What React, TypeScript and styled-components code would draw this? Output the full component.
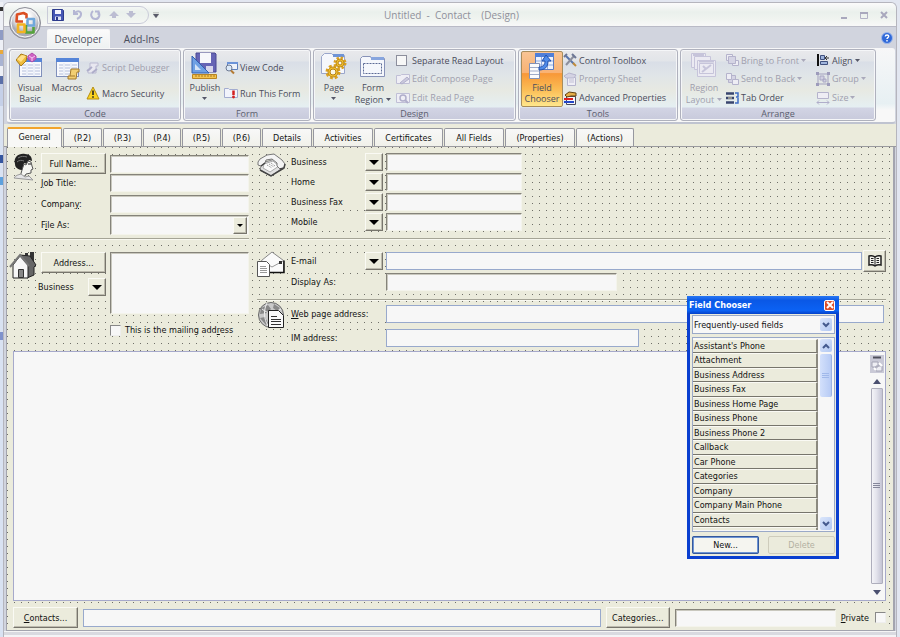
import React from 'react';
import styled, { createGlobalStyle, css } from 'styled-components';

const ribbonFont = '"Open Sans", "Noto Sans", sans-serif';
const formFont = '"DejaVu Sans Condensed", "DejaVu Sans", sans-serif';
const face = '#ebebdc';
const muted = '#a09fae';

const GlobalStyle = createGlobalStyle`
  * { box-sizing: border-box; }
  body { margin: 0; background: #e2e6f0; }
  button, input, select, textarea { font: inherit; color: inherit; margin: 0; border-radius: 0; }
  button { padding: 0; background: none; border: 0; white-space: nowrap; }
  svg { display: block; flex: none; }
`;

/* ---------- window frame ---------- */

const Desktop = styled.div`
  display: flex;
  min-height: 100vh;
  padding: 2px 3px 0 0;
  font: 9px/12px ${formFont};
  color: #111;
`;
const BehindStrip = styled.div`
  width: 3px;
  flex: none;
  background: linear-gradient(#eef0f6 5px, #333 5px 9px, #eef0f6 9px 28px, #8f9bc4 28px 38px, #eef0f6 38px 48px,
    #e9a93a 48px 52px, #a9b3d2 52px 64px, #eef0f6 64px 74px, #5a6fa8 74px 82px, #c5d0e8 82px 104px, #d9e2f2 104px 153px,
    #34559f 153px 161px, #d9e2f2 161px 175px, #5da0dd 175px 183px, #d9e2f2 183px 330px, #7f92cc 330px 338px, #d9e2f2 338px);
`;
const Frame = styled.div`
  position: relative;
  flex: 1;
  min-width: 0;
  display: flex;
  flex-direction: column;
  border: 1px solid #b5b5bd;
  border-bottom: 0;
  border-radius: 6px 6px 0 0;
  background: #d1d4de;
  overflow: hidden;
`;

/* ---------- title bar ---------- */

const TitleBar = styled.header`
  position: relative;
  display: flex;
  align-items: center;
  height: 24px;
  padding: 0 8px 0 43px;
  border-bottom: 1px solid #b9bac6;
  background: linear-gradient(#fbfbfb, #eaf0ec 40%, #f0f4f0 70%, #f8f8f8);
  font: 10px/14px ${ribbonFont};
  color: #8f909b;
`;
const OfficeButton = styled.button`
  position: absolute;
  z-index: 2;
  left: 5px;
  top: 4px;
`;
const QuickBar = styled.div`
  display: flex;
  align-items: center;
  justify-content: space-between;
  width: 102px;
  height: 18px;
  padding: 0 12px 0 4px;
  border: 1px solid #c9cbd8;
  border-radius: 0 9px 9px 0;
`;
const QuickMore = styled.button`
  margin-left: 4px;
`;
const Title = styled.h1`
  flex: 1;
  margin: 0 0 0 4px;
  text-align: center;
  font: inherit;
  white-space: pre;
`;
const WindowButtons = styled.div`
  display: flex;
  gap: 12px;
  margin-left: 100px;
`;

/* ---------- ribbon ---------- */

const RibbonTabs = styled.nav`
  display: flex;
  align-items: flex-end;
  height: 21px;
  padding: 0 3px 0 43px;
  font: 10px/18px ${ribbonFont};
  color: #4b4e5d;
`;
const RibbonTab = styled.button<{ $active?: boolean }>`
  height: 19px;
  width: 63px;
  ${(p) => p.$active && css`
    background: linear-gradient(#fbfbfb, #eef2f2);
    border: 1px solid #f6f6f6;
    border-bottom: 0;
    border-radius: 2px 2px 0 0;
  `}
`;
const HelpButton = styled.button`
  margin-left: auto;
  align-self: center;
`;
const RibbonPanel = styled.div`
  display: flex;
  gap: 2px;
  margin: 0 1px 0 3px;
  padding: 1px 2px 1px;
  border-bottom: 2px solid #bfc3d0;
  border-radius: 3px;
  background: linear-gradient(#f7f7f8, #e7f0f3 75%, #f8f8f8 84%);
  font: 9px/11px ${ribbonFont};
  color: #4b4d5c;
`;
const GroupBox = styled.section<{ $width: number }>`
  display: flex;
  flex-direction: column;
  width: ${(p) => p.$width}px;
  height: 72px;
  border: 1px solid #afb1bd;
  border-radius: 3px;
  box-shadow: inset 0 0 0 1px #f5f6f8;
  background: linear-gradient(#e9e9ec 0, #e2e5e9 11px, #d9dee7 12px, #e0e5e8 25px, #e7e9e2 40px, #e5eff2 57px, #d2d4e4 58px, #c6c8da 72px);
`;
const GroupBody = styled.div`
  display: flex;
  align-items: flex-start;
  height: 57px;
  padding: 1px 2px 0;
`;
const GroupTitle = styled.h2`
  margin: 0;
  text-align: center;
  font: 9px/13px ${ribbonFont};
  color: #5b5d6d;
`;
const BigButton = styled.button<{ $active?: boolean; $width: number }>`
  display: flex;
  flex-direction: column;
  align-items: center;
  width: ${(p) => p.$width}px;
  height: 56px;
  padding-top: 1px;
  border-radius: 2px;
  gap: 2px;
  white-space: normal;
  &:disabled { color: ${muted}; }
  ${(p) => p.$active && css`
    border: 1px solid #a88d5b;
    padding-top: 0;
    background: linear-gradient(#f8c494, #f9b273 38%, #f89838 40%, #fbbd55 70%, #ffe78c);
  `}
`;
const SmallColumn = styled.div<{ $rows: number }>`
  display: flex;
  flex-direction: column;
  height: 56px;
  justify-content: space-around;
  padding: ${(p) => (p.$rows === 2 ? '4px 0 1px' : '0')};
`;
const DesignColumn = styled(SmallColumn)`
  padding-left: 2px;
`;
const SmallButton = styled.button`
  display: flex;
  align-items: center;
  gap: 2px;
  height: 16px;
  &:disabled { color: ${muted}; }
`;
const RibbonCheck = styled.label`
  display: flex;
  align-items: center;
  gap: 5px;
  height: 16px;
  white-space: nowrap;
`;
const CheckBox = styled.input`
  appearance: none;
  flex: none;
  width: 11px;
  height: 11px;
  background: #f7f7f7;
  border: 1px solid #8c8e9c;
`;
const FormCheckBox = styled(CheckBox)`
  border-color: #888 #eee #eee #888;
`;
const BigLabel = styled.span`
  display: block;
`;
const DropLine = styled.span`
  display: flex;
  align-items: center;
  justify-content: center;
  gap: 3px;
  min-height: 8px;
  margin-top: 1px;
`;

/* ---------- page tabs ---------- */

const PageTabs = styled.div`
  display: flex;
  align-items: flex-end;
  gap: 1px;
  height: 23px;
  padding-left: 3px;
  background: ${face};
  border-bottom: 1px solid #9a9a9e;
`;
const PageTab = styled.button<{ $width: number; $active?: boolean }>`
  width: ${(p) => p.$width}px;
  height: ${(p) => (p.$active ? 20 : 18)}px;
  margin-bottom: ${(p) => (p.$active ? -1 : 0)}px;
  border: 1px solid #96979f;
  border-bottom: 0;
  border-radius: 2px 2px 0 0;
  background: linear-gradient(#f8f8f8, #f1f1ea);
  ${(p) => p.$active && css`
    border-top: 2px solid #f2a42c;
    background: #f8f8f6;
    padding-bottom: 2px;
  `}
`;

/* ---------- form surface ---------- */

const Surface = styled.main`
  flex: 1;
  display: flex;
  flex-direction: column;
  margin: 0 1px 0 2px;
  padding: 2px 7px 1px 6px;
  border: solid #a3a4ae;
  border-width: 0 2px 1px 1px;
  background: conic-gradient(at 1px 1px, transparent 75%, #6f6f68 0) 0 0 / 7px 7px ${face};
`;
const Columns = styled.div`
  display: grid;
  grid-template-columns: 236px 1fr;
  column-gap: 8px;
`;
const Side = styled.div`
  display: flex;
  flex-direction: column;
`;
const Block = styled.section<{ $icon?: number; $height: number; $top?: number }>`
  display: grid;
  grid-template-columns: ${(p) => p.$icon ?? 34}px 1fr;
  align-items: start;
  height: ${(p) => p.$height}px;
  padding-top: ${(p) => p.$top ?? 0}px;
`;
const Rows = styled.div<{ $gap: number; $top?: number }>`
  display: flex;
  flex-direction: column;
  gap: ${(p) => p.$gap}px;
  padding-top: ${(p) => p.$top ?? 0}px;
`;
const Rule = styled.hr`
  width: 100%;
  margin: 0;
  border: 0;
  border-top: 1px solid #a5a496;
  border-bottom: 1px solid #f8f8f0;
`;
const Field = styled.div<{ $label?: number; $height?: number }>`
  display: grid;
  grid-template-columns: ${(p) => p.$label ?? 69}px 1fr;
  align-items: center;
  height: ${(p) => p.$height ?? 18}px;
`;
const LabelCell = styled.div`
  display: flex;
  align-items: center;
  justify-content: space-between;
  padding-right: 3px;
`;
const Caption = styled.label`
  flex: 1;
  background: ${face};
  line-height: 16px;
  white-space: nowrap;
`;
const sunken = css`
  border: 1px solid;
  border-color: #85837a #f4f4ec #f4f4ec #85837a;
  box-shadow: inset 1px 1px #c9c8be;
`;
const TextBox = styled.input<{ $flat?: boolean; $width?: number }>`
  width: ${(p) => (p.$width ? p.$width + 'px' : '100%')};
  min-width: 0;
  height: 18px;
  padding: 0 3px;
  background: #f7f7f7;
  ${(p) => (p.$flat ? css`border: 1px solid #98a9cc;` : sunken)}
`;
const TextArea = styled.textarea`
  display: block;
  width: 100%;
  height: 62px;
  resize: none;
  background: #f7f7f7;
  ${sunken}
`;
const raised = css`
  background: ${face};
  border: 1px solid;
  border-color: #fafaf4 #77756c #77756c #fafaf4;
  box-shadow: inset -1px -1px #bdbbae;
`;
const PushButton = styled.button<{ $width?: number }>`
  flex: none;
  width: ${(p) => p.$width ?? 65}px;
  height: 21px;
  ${raised}
`;
const ArrowButton = styled.button`
  display: grid;
  place-items: center;
  flex: none;
  width: 18px;
  height: 18px;
  ${raised}
`;
const BookButton = styled(ArrowButton)`
  width: 23px;
  height: 22px;
`;
const Combo = styled.div`
  display: flex;
  align-items: center;
  height: 20px;
  padding-right: 1px;
  background: #f7f7f7;
  ${sunken}
`;
const ComboInput = styled.input`
  flex: 1;
  min-width: 0;
  border: 0;
  background: transparent;
`;
const ComboArrow = styled(ArrowButton)`
  width: 14px;
  height: 17px;
`;
const AddressRow = styled.div`
  display: grid;
  grid-template-columns: 69px 1fr;
  padding-top: 1px;
`;
const AddressKind = styled.div`
  display: flex;
  align-items: center;
  justify-content: space-between;
  margin: 5px 4px 0 -3px;
`;
const MailCheck = styled.label`
  display: flex;
  align-items: center;
  gap: 4px;
  margin: 10px 0 0 69px;
  background: ${face};
`;
const WideLine = styled.div`
  display: flex;
  align-items: center;
  gap: 1px;
`;
const HouseSlot = styled.div`
  margin-left: -4px;
`;
const WebBox = styled(TextBox)`
  width: calc(100% - 2px);
`;

/* ---------- memo ---------- */

const Memo = styled.div`
  flex: 1;
  display: flex;
  min-height: 200px;
  border: 1px solid #a6a9cb;
  background: #f7f7f7;
  margin: 0 0 5px;
`;
const MemoText = styled.textarea`
  flex: 1;
  border: 0;
  resize: none;
  background: transparent;
`;
const ScrollColumn = styled.div`
  display: flex;
  flex-direction: column;
  align-items: center;
  width: 16px;
  padding: 3px 1px 5px 0;
`;
const ScrollUp = styled.button`
  margin-top: 6px;
`;
const ScrollThumb = styled.div`
  flex: 1;
  display: grid;
  place-items: center;
  width: 12px;
  margin: 4px 0 6px;
  border: 1px solid #aeaebc;
  border-radius: 1px;
  background: linear-gradient(90deg, #f4f4f8, #e3e3ec 45%, #c4c4d4);
`;
const Footer = styled.div`
  display: flex;
  align-items: center;
  gap: 5px;
  height: 23px;
  background: linear-gradient(${face}, ${face}) 0 0 / 100% 20px no-repeat;
`;
const CategoriesBox = styled(TextBox)`
  flex: none;
  width: 161px;
`;
const PrivateLabel = styled.label`
  display: flex;
  align-items: center;
  gap: 6px;
`;
const BottomEdge = styled.div`
  height: 6px;
  border-top: 1px solid #f5f5f5;
  border-bottom: 2px solid #f4f4f6;
  background: #d9dae0;
`;

/* ---------- field chooser ---------- */

const Chooser = styled.aside`
  position: absolute;
  z-index: 3;
  right: 57px;
  top: 293px;
  width: 152px;
  border: 3px solid #0a3fd0;
  border-top: 0;
  background: ${face};
`;
const ChooserTitle = styled.div`
  display: flex;
  align-items: center;
  justify-content: space-between;
  height: 18px;
  margin: 0 -3px;
  padding: 0 4px 0 2px;
  background: linear-gradient(#2a78f2, #0a58e6 25%, #0b62f4 80%, #0440c8);
  color: #fff;
  font: bold 9px/16px ${formFont};
`;
const CloseButton = styled.button`
  display: grid;
  place-items: center;
  width: 11px;
  height: 11px;
  border: 1px solid #fff;
  border-radius: 2px;
  background: #dd4f2b;
`;
const ChooserBody = styled.div`
  padding: 1px 1px 2px 2px;
`;
const SelectWrap = styled.label`
  display: grid;
  align-items: center;
  justify-items: end;
  height: 19px;
  padding-right: 2px;
  border: 1px solid #9aa9c8;
  background: #f7f7f7;
`;
const Select = styled.select`
  grid-area: 1 / 1;
  appearance: none;
  width: 100%;
  padding: 0 0 0 1px;
  border: 0;
  background: transparent;
`;
const BlueArrow = styled.span`
  grid-area: 1 / 1;
  display: grid;
  place-items: center;
  width: 12px;
  height: 13px;
  border-radius: 2px;
  background: linear-gradient(135deg, #dbe6fb, #b2c8f2);
  pointer-events: none;
`;
const ListFrame = styled.div`
  display: flex;
  height: 195px;
  margin-top: 3px;
  padding: 1px 1px 1px 0;
  border: 1px solid #9aa9c8;
  background: #f7f7f7;
  overflow: hidden;
`;
const List = styled.ul`
  flex: 1;
  display: flex;
  flex-direction: column;
  margin: 0;
  padding: 0;
  list-style: none;
  overflow: hidden;
`;
const Item = styled.li`
  flex: 1;
  padding-left: 1px;
  background: ${face};
  border-top: 1px solid #fafaf4;
  border-right: 2px solid #8b897f;
  border-bottom: 1px solid #77756c;
  line-height: 12px;
  &:last-child { flex: none; height: 3px; border-bottom: 0; }
`;
const ListScroll = styled.div`
  display: flex;
  flex-direction: column;
  align-items: center;
  justify-content: space-between;
  width: 15px;
`;
const ListScrollTop = styled.div`
  display: grid;
  gap: 2px;
`;
const ListThumb = styled.div`
  display: grid;
  place-items: center;
  width: 12px;
  height: 43px;
  border-radius: 2px;
  border-right: 1px solid #9cb4e4;
  background: linear-gradient(90deg, #d3e0fb, #b7cbf5);
`;
const ChooserButtons = styled.div`
  display: flex;
  justify-content: space-between;
  margin-top: 4px;
`;
const XpButton = styled.button`
  width: 67px;
  height: 18px;
  border: 2px solid #6d94d4;
  outline: 1px solid #35589c;
  outline-offset: -1px;
  border-radius: 2px;
  background: #f5f5f0;
  &:disabled { border: 1px solid #ceccbc; outline: 0; color: #b3b1a2; background: ${face}; }
`;

/* ---------- icons ---------- */

const Svg = ({ w, h = w, children }: { w: number; h?: number; children: React.ReactNode }) => (
  <svg width={w} height={h} viewBox={`0 0 ${w} ${h}`} fill="none" aria-hidden="true">{children}</svg>
);
const Drop = ({ c = '#555768' }: { c?: string }) => <Svg w={5} h={3}><path d="M0 0h5L2.500 3z" fill={c} /></Svg>;
const BlackDrop = ({ w = 10 }: { w?: number }) => (
  <Svg w={w} h={w / 2}><path d={`M0 0h${w}L${w / 2} ${w / 2}z`} fill="#000" /></Svg>
);
const Chevron = ({ up }: { up?: boolean }) => (
  <Svg w={8} h={6}><path d={up ? 'M1 5l3-3 3 3' : 'M1 1l3 3 3-3'} stroke="#445a8e" strokeWidth="2" /></Svg>
);
const Close = ({ c }: { c: string }) => <Svg w={8}><path d="M1 1l6 6M7 1L1 7" stroke={c} strokeWidth="2" /></Svg>;

const OfficeLogo = () => (
  <Svg w={32}>
    <defs><radialGradient id="orb" cx=".5" cy=".3"><stop offset=".3" stopColor="#fff" /><stop offset=".75" stopColor="#d7d7dc" /><stop offset="1" stopColor="#a9aab4" /></radialGradient></defs>
    <circle cx="16" cy="16" r="15.500" fill="url(#orb)" stroke="#8e8f99" />
    <circle cx="16" cy="16" r="14" stroke="#fafafa" />
    <g strokeLinejoin="round" strokeWidth="2.600">
      <path d="M14 14.500H7.500l.5-7 6.500-1.500 3 1.500v4" stroke="#db4f23" />
      <path d="M17.500 12H25v6.500h-6.500V13" stroke="#70a8dc" />
      <path d="M17 18v7.500h7.500V20" stroke="#55a33c" />
      <path d="M15.500 17.500H9V25h6.500z" stroke="#f3b321" />
    </g>
  </Svg>
);
const Floppy = () => (
  <Svg w={12}><path d="M.5.5h10l1 1v10H.5z" fill="#4657b5" stroke="#2c3a8c" /><path d="M3 1h6v4H3z" fill="#f5f5ff" /><path d="M3 7.500h6V11H3z" fill="#dfe3f4" /><path d="M4 8h2v3H4z" fill="#2c3a8c" /></Svg>
);
const Undo = () => <Svg w={11}><path d="M2 1v4h4M2.500 4.500C5 1 9.500 2 9 5.500 9 8 7 9 5 10" stroke="#b4b6d4" strokeWidth="2" /></Svg>;
const Redo = () => <Svg w={11}><path d="M3 2C-.5 5 1.500 10 5.500 10S10.500 5 8 2M5 2.500h3.500V6" stroke="#b4b6d4" strokeWidth="2" /></Svg>;
const NavUp = () => <Svg w={10} h={8}><path d="M5 0l5 5H7v2H3V5H0z" fill="#bcbdd2" /></Svg>;
const NavDown = () => <Svg w={10} h={8}><path d="M5 7l5-5H7V0H3v2H0z" fill="#bcbdd2" /></Svg>;
const Help = () => (
  <Svg w={12}><circle cx="6" cy="6" r="5.500" fill="#2f68d8" stroke="#9db7ea" /><path d="M4.300 4.600C4.300 2.500 7.800 2.600 7.700 4.500 7.600 5.600 6 5.700 6 7M6 8v1.400" stroke="#fff" strokeWidth="1.400" /></Svg>
);

const sheet = (
  <>
    <rect x="3.500" y="6.500" width="22" height="18" fill="#f8f9fd" stroke="#8090bb" />
    <path d="M3 6h23v4H3z" fill="#5584d8" />
    <path d="M6 13h4m2 0h5m2 0h5M6 16h4m2 0h5m2 0h5M6 19h4m2 0h5m2 0h5M6 22h4m2 0h5m2 0h5" stroke="#b4bfdc" />
    <path d="M11 11v13m7-13v13" stroke="#dbe3f2" />
  </>
);
const VisualBasicIcon = () => (
  <Svg w={28}>{sheet}<path d="M0 8l5-6 6 2-1 5-5 5z" fill="#efbc3c" stroke="#a77a18" /><path d="M1 7l5-4 4 1-5 6z" fill="#ffe08a" /><path d="M12 4l4-3 4 3v3l-4 3-4-3z" fill="#cf62c4" stroke="#b04aa8" /><path d="M13 4l3 2 3-2M16 6v3" stroke="#f5c9f0" /></Svg>
);
const MacrosIcon = () => (
  <Svg w={28}>{sheet}<path d="M18 17h8v3h-2l-1 7h-8v-3h2z" fill="#f2cf72" stroke="#a2792a" /><path d="M17 24h5" stroke="#a2792a" /></Svg>
);
const ScriptIcon = () => (
  <Svg w={14}><path d="M4 2h8v3h-2v7H2V9h2z" fill="#e8e7f0" stroke="#bab9d0" /><path d="M1 10l5-4M6 12l5-4" stroke="#aeadca" strokeWidth="2" /></Svg>
);
const WarningIcon = () => (
  <Svg w={14}><path d="M7 1l6 12H1z" fill="#fbd420" stroke="#b48d10" strokeLinejoin="round" /><path d="M7 4.500v4.500M7 10.300v1.400" stroke="#222" strokeWidth="1.600" /></Svg>
);
const PublishIcon = () => (
  <Svg w={28}><path d="M5 1h19l1 1v18H5z" fill="#6664b5" stroke="#4a4991" /><path d="M9 1h11v10H9z" fill="#f7f7fb" /><path d="M15 14h7v6h-7z" fill="#d7d6ec" /><path d="M1 4l17 17H1z" fill="#6fa0e4" stroke="#315fae" /><path d="M4 12l6 6H4z" fill="#d5e3f6" /><path d="M1.500 22.500h24v4h-24z" fill="#f4c44f" stroke="#b98422" /><path d="M5 23v2m3-2v2m3-2v2m3-2v2m3-2v2m3-2v2m3-2v2" stroke="#a87a28" /></Svg>
);
const ViewCodeIcon = () => (
  <Svg w={14}><path d="M3.500 1.500h10v7h-10z" fill="#eef2fa" stroke="#5f80bb" /><path d="M3 1h11v2H3z" fill="#6b93d8" /><circle cx="5" cy="7" r="3" fill="#dbe9f8" stroke="#6d7a93" /><path d="M7 9.500l3 3" stroke="#b37a34" strokeWidth="2" /></Svg>
);
const RunIcon = () => (
  <Svg w={14}><path d="M.5 2.500h4l1 1h8v8H.5z" fill="#f1f3fb" stroke="#a3acd0" /><path d="M9.500 4.500v4.500" stroke="#d32020" strokeWidth="2.500" /><circle cx="9.500" cy="11" r="1.400" fill="#d32020" /></Svg>
);
const Gear = ({ x, y, r }: { x: number; y: number; r: number }) => (
  <g>
    <circle cx={x} cy={y} r={r} stroke="#d9a022" strokeWidth="3" strokeDasharray={`${r * 0.45} ${r * 0.335}`} />
    <circle cx={x} cy={y} r={r - 1} fill="#f4c22f" stroke="#c08c18" />
    <circle cx={x} cy={y} r={r - 3} fill="#fbf6e4" stroke="#b5800f" />
  </g>
);
const PageIcon = () => (
  <Svg w={28}><path d="M1.500 4.500l3-3h7l2 2h11v18h-23z" fill="#f5f7fc" stroke="#9aa6cb" /><path d="M13 2h11v3H13z" fill="#6f94d6" /><Gear x={20} y={11} r={5} /><Gear x={13} y={20} r={6} /></Svg>
);
const RegionIcon = () => (
  <Svg w={28}><path d="M1.500 6.500l2-2h8l1 2h13v18h-24z" fill="#f5f7fc" stroke="#8792b8" /><path d="M12 5h13v3H12z" fill="#87a5de" /><rect x="4.500" y="11.500" width="18" height="10" stroke="#5c6b96" strokeDasharray="2 1" /></Svg>
);
const EditPageIcon = () => (
  <Svg w={14}><path d="M.5 3.500h4l1-1h8v9H.5z" fill="#efeef5" stroke="#c0bfd6" /><path d="M4 11l7-6 2 2-7 5z" fill="#cbc9de" stroke="#b2b0cb" /></Svg>
);
const ReadPageIcon = () => (
  <Svg w={14}><path d="M.5 2.500h13v9H.5z" fill="#efeef5" stroke="#c0bfd6" /><circle cx="7" cy="7" r="3" stroke="#b0aecb" strokeWidth="1.500" /><path d="M9 9l3 3" stroke="#b0aecb" strokeWidth="2" /></Svg>
);
const ChooserIcon = () => (
  <Svg w={28}><path d="M7.500 1.500h18v16h-18z" fill="#eef3fc" stroke="#5c7cc0" /><path d="M7 1h19v4H7z" fill="#4f7fd8" /><path d="M8 9h17M8 13h17M13.500 5v12M19.500 5v12" stroke="#91abe0" /><path d="M1.500 11.500h10v15h-10z" fill="#fbfbfd" stroke="#8391b6" /><path d="M2 15.500h9M2 19h9M2 22.500h9" stroke="#9fabc9" /><path d="M11 15c4 0 6-2 6-6h-3l4-6 5 6h-3c0 6-3 9-9 9z" fill="#4e8bea" stroke="#2351ac" /></Svg>
);
const ToolboxIcon = () => (
  <Svg w={14}><path d="M3 3l8 8" stroke="#5875ac" strokeWidth="2" /><path d="M11 3L3 12" stroke="#8c8f9d" strokeWidth="2" /><path d="M9 1l4 4M1 4l3-3" stroke="#6d7796" strokeWidth="2" /><path d="M10 10l3 3" stroke="#c28c3a" strokeWidth="2" /></Svg>
);
const PropertyIcon = () => (
  <Svg w={14}><path d="M4.500 5.500h8v8h-8z" fill="#efeef5" stroke="#b6b5cd" /><path d="M6 8h5M6 10h5" stroke="#c0bfd4" /><path d="M1 4l5-3 7 2-2 3H3z" fill="#d4d3e3" stroke="#b6b5cd" /></Svg>
);
const AdvancedIcon = () => (
  <Svg w={14}><path d="M3.500 5.500h9v8h-9z" fill="#f8f8f8" stroke="#4a4a5a" /><path d="M1 8h9" stroke="#d22" strokeWidth="2" /><path d="M1 11h10" stroke="#2448c8" strokeWidth="2" /><path d="M2 4l4-3 7 1v3H8L4 6z" fill="#e6b04a" stroke="#63430f" /></Svg>
);
const LayoutIcon = () => (
  <Svg w={28}><g fill="#ebeaf2" stroke="#c6c4da"><path d="M1.500 1.500h14v14h-14z" /><path d="M4.500 4.500h16v13h-16z" /><path d="M7.500 8.500h18v16h-18z" /><path d="M9.500 11.500h14v10h-14z" /></g><path d="M3 3h11M9 9.500h15M12 20l9-7M13 14l3 3" stroke="#c6c4da" strokeWidth="2" /></Svg>
);
const FrontIcon = () => (
  <Svg w={14}><g fill="#eeedf4" stroke="#b5b3cc"><path d="M1.500 1.500h6v6h-6zM7.500 7.500h6v5h-6z" /><path d="M3.500 3.500h7v7h-7z" fill="#d5d4e4" /></g></Svg>
);
const BackIcon = () => (
  <Svg w={14}><g fill="#eeedf4" stroke="#b5b3cc"><path d="M3.500 3.500h7v7h-7z" fill="#d5d4e4" /><path d="M1.500 1.500h5v6h-5zM7.500 7.500h6v5h-6z" /></g></Svg>
);
const TabOrderIcon = () => (
  <Svg w={14}><path d="M1 2.500h8M1 7h8M1 11.500h8" stroke="#39456e" strokeWidth="2.500" /><path d="M3 7h4" stroke="#e5d9a8" /><path d="M10 2h3v4h-2m2 1v5h-3" stroke="#3e6cc4" strokeWidth="1.500" /></Svg>
);
const AlignIcon = () => (
  <Svg w={14}><path d="M2 1v12" stroke="#111" strokeWidth="2" /><path d="M4.500 2.500h4v4h-4zM4.500 8.500h7v3h-7z" fill="#9fb4dc" stroke="#3f507e" /><path d="M13 5H9m2-2L9 5l2 2" stroke="#333" /></Svg>
);
const GroupIcon = () => (
  <Svg w={14}><path d="M2 2h10v10H2z" stroke="#a3a1be" /><path d="M4 4h4v4H4zM7 7h3v3H7z" fill="#d0cfe2" stroke="#aaa8c4" /><path d="M0 0h3v3H0zM11 0h3v3h-3zM0 11h3v3H0zM11 11h3v3h-3z" fill="#9d9bbb" /></Svg>
);
const SizeIcon = () => (
  <Svg w={14}><path d="M1.500 1.500h11v6h-11z" fill="#eeedf4" stroke="#b5b3cc" /><path d="M1 11.500h12M3 9.500l-2 2 2 2M11 9.500l2 2-2 2" stroke="#b0aeca" /></Svg>
);

const PersonIcon = () => (
  <Svg w={24} h={28}><path d="M2 11C0 4 6 0 12 1c5 0 7 3 7 7l-3-1-2 4-3-1-1 7c-4 0-8-2-8-6z" fill="#222" /><path d="M5 5c3-2 6-2 9-1M4 9c2-2 5-2 7-1" stroke="#777" /><path d="M11 11l2 1 2-4 3 1 1 4 1 3-2 1v3l-5 1-1 2-5 1 2-7z" fill="#f6f6f2" stroke="#555" /><path d="M15 11h3" stroke="#111" /><path d="M1 25c2-3 4-3 7-4l4 3 4-1 4 4z" fill="#e4e4e6" stroke="#999" /></Svg>
);
const HouseIcon = () => (
  <Svg w={28}><path d="M16 2h3v8h-3zM21 1h4v10h-4z" fill="#333" /><path d="M11 4l10 1 6 9-2 2v8l-7 3V13z" fill="#666" stroke="#222" /><path d="M4 14l7-9 8 9v13H4z" fill="#f8f8f8" stroke="#222" /><path d="M1 16L11 4l9 11" stroke="#777" strokeWidth="2" /><path d="M9.500 18.500h5v8h-5z" fill="#888" stroke="#333" /></Svg>
);
const PhoneIcon = () => (
  <Svg w={30} h={24}>
    <path d="M5 10l13-4 9 8-13 9-11-6z" fill="#e2e2e2" stroke="#888" />
    <path d="M3 17l11 6 13-8" stroke="#444" strokeWidth="1.500" />
    <path d="M7 11l9-3 6 5-9 6-7-4z" fill="#fafafa" stroke="#aaa" />
    <path d="M10 12l5 3M12 11l5 3M14 10l4 3" stroke="#888" strokeDasharray="1 1" />
    <path d="M1 9l2-3L10 2l7-1 8 6 3 4-1 4-4 1-3-3v-3l-5-4-6 1-1 3-4 3-3-1z" fill="#f4f4f4" stroke="#777" />
    <path d="M28 11l-1 4-4 1M8 10l-4 3" stroke="#444" strokeWidth="1.500" />
  </Svg>
);
const MailIcon = () => (
  <Svg w={28}><path d="M4.500 10.500L15 2l11.500 8.500v12h-22z" fill="#fafafa" stroke="#888" /><path d="M5 11l10 6 11-6" stroke="#999" /><path d="M5 22.500h22v-12" stroke="#111" strokeWidth="1.500" /><path d="M22 11h3v3h-3z" fill="#333" /><path d="M.5 11.500h9l3 3v12H.5z" fill="#fff" stroke="#555" /><path d="M3 16.500h6M3 18.500h7M3 20.500h7M3 22.500h7" stroke="#999" /></Svg>
);
const WebIcon = () => (
  <Svg w={28}><circle cx="14" cy="14" r="12.500" fill="#c9c9c9" stroke="#666" /><path d="M4 7l7-3 3 4-4 4-7 1zM17 3l6 4-3 3-4-3zM3 17l5-1 3 6-2 2z" fill="#888" /><path d="M5 8c6 5 12 5 19 0M10 2c-4 8-3 16 1 23" stroke="#eee" /><path d="M11.500 9.500h10l5 5v12h-15z" fill="#fafafa" stroke="#222" /><path d="M14 15.500h6M14 18.500h10M14 20.500h10M14 23.500h10" stroke="#333" /></Svg>
);
const BookIcon = () => (
  <Svg w={14} h={12}><path d="M7 2C5 .5 3 .5 1 1v9c2-.5 4-.5 6 1 2-1.500 4-1.500 6-1V1C11 .5 9 .5 7 2z" fill="#f4f4ee" stroke="#222" strokeWidth="1.500" /><path d="M7 2v9M3 3.500h2.500M3 5.500h2.500M3 7.500h2.500M8.500 3.500H11M8.500 5.500H11M8.500 7.500H11" stroke="#222" /></Svg>
);
const CompareIcon = () => (
  <Svg w={14} h={18}><path d="M0 0h14v18H0z" fill="#c9c9d6" /><path d="M3 2.500h8" stroke="#4e4f5c" strokeWidth="2" /><path d="M2 7h6v5H2zM6 11h6v5H6z" fill="#eeeef4" stroke="#a3a3b4" /><path d="M9 8l3 3m-8 2l2 2" stroke="#fff" strokeWidth="2" /></Svg>
);
const GripIcon = ({ c }: { c: string }) => <Svg w={7} h={6}><path d="M0 .5h7M0 2.500h7M0 4.500h7" stroke={c} /></Svg>;

/* ---------- content ---------- */

const pageTabs: [string, number][] = [
  ['General', 55], ['(P.2)', 39], ['(P.3)', 39], ['(P.4)', 38], ['(P.5)', 39], ['(P.6)', 39], ['Details', 50],
  ['Activities', 60], ['Certificates', 69], ['All Fields', 60], ['(Properties)', 70], ['(Actions)', 58],
];
const fields = [
  "Assistant's Phone", 'Attachment', 'Business Address', 'Business Fax', 'Business Home Page', 'Business Phone',
  'Business Phone 2', 'Callback', 'Car Phone', 'Categories', 'Company', 'Company Main Phone', 'Contacts', '',
];

const Group = ({ title, width, children }: { title: string; width: number; children: React.ReactNode }) => (
  <GroupBox $width={width}><GroupBody>{children}</GroupBody><GroupTitle>{title}</GroupTitle></GroupBox>
);
const Tool = ({ icon, text, off, drop }: { icon: React.ReactNode; text: string; off?: boolean; drop?: boolean }) => (
  <SmallButton disabled={off}>{icon}<span>{text}</span>{drop && <Drop c={off ? '#aaa9bb' : undefined} />}</SmallButton>
);
const ArrangeColumn = styled(SmallColumn)`
  width: 91px;
`;

const PhoneRow = ({ id, label }: { id: string; label: string }) => (
  <Field $label={95}>
    <LabelCell><Caption htmlFor={id}>{label}</Caption><ArrowButton aria-label={`Choose ${label}`}><BlackDrop /></ArrowButton></LabelCell>
    <TextBox id={id} $width={136} />
  </Field>
);

export default function App() {
  return (
    <Desktop>
      <GlobalStyle />
      <BehindStrip />
      <Frame>
        <OfficeButton aria-label="Office"><OfficeLogo /></OfficeButton>
        <TitleBar>
          <QuickBar>
            <button aria-label="Save"><Floppy /></button>
            <button aria-label="Undo"><Undo /></button>
            <button aria-label="Redo"><Redo /></button>
            <button aria-label="Previous"><NavUp /></button>
            <button aria-label="Next"><NavDown /></button>
          </QuickBar>
          <QuickMore aria-label="Customize"><Svg w={6}><path d="M0 .5h6M0 2h6L3 6z" fill="#555768" stroke="#777" strokeWidth=".3" /></Svg></QuickMore>
          <Title>{'Untitled  -  Contact    (Design)'}</Title>
          <WindowButtons>
            <button aria-label="Minimize"><Svg w={8}><path d="M1 7h6" stroke="#a9a8bd" strokeWidth="2" /></Svg></button>
            <button aria-label="Maximize"><Svg w={8}><path d="M.5 1.500h7v6h-7z" stroke="#b3b2c6" /><path d="M0 2h8" stroke="#a9a8bd" strokeWidth="2" /></Svg></button>
            <button aria-label="Close"><Close c="#a9a8bd" /></button>
          </WindowButtons>
        </TitleBar>
        <RibbonTabs>
          <RibbonTab $active>Developer</RibbonTab>
          <RibbonTab>Add-Ins</RibbonTab>
          <HelpButton aria-label="Help"><Help /></HelpButton>
        </RibbonTabs>
        <RibbonPanel>
          <Group title="Code" width={172}>
            <BigButton $width={36}><VisualBasicIcon /><BigLabel>Visual Basic</BigLabel></BigButton>
            <BigButton $width={38}><MacrosIcon />Macros</BigButton>
            <SmallColumn $rows={2}>
              <Tool icon={<ScriptIcon />} text="Script Debugger" off />
              <Tool icon={<WarningIcon />} text="Macro Security" />
            </SmallColumn>
          </Group>
          <Group title="Form" width={128}>
            <BigButton $width={38}><PublishIcon /><span>Publish<DropLine><Drop /></DropLine></span></BigButton>
            <SmallColumn $rows={2}>
              <Tool icon={<ViewCodeIcon />} text="View Code" />
              <Tool icon={<RunIcon />} text="Run This Form" />
            </SmallColumn>
          </Group>
          <Group title="Design" width={203}>
            <BigButton $width={36}><PageIcon /><span>Page<DropLine><Drop /></DropLine></span></BigButton>
            <BigButton $width={42}><RegionIcon /><span>Form<DropLine>Region<Drop /></DropLine></span></BigButton>
            <DesignColumn $rows={3}>
              <RibbonCheck><CheckBox type="checkbox" />Separate Read Layout</RibbonCheck>
              <Tool icon={<EditPageIcon />} text="Edit Compose Page" off />
              <Tool icon={<ReadPageIcon />} text="Edit Read Page" off />
            </DesignColumn>
          </Group>
          <Group title="Tools" width={160}>
            <BigButton $width={42} $active><ChooserIcon /><BigLabel>Field Chooser</BigLabel></BigButton>
            <SmallColumn $rows={3}>
              <Tool icon={<ToolboxIcon />} text="Control Toolbox" />
              <Tool icon={<PropertyIcon />} text="Property Sheet" off />
              <Tool icon={<AdvancedIcon />} text="Advanced Properties" />
            </SmallColumn>
          </Group>
          <Group title="Arrange" width={196}>
            <BigButton $width={42} disabled><LayoutIcon /><span>Region<DropLine>Layout<Drop c="#aaa9bb" /></DropLine></span></BigButton>
            <ArrangeColumn $rows={3}>
              <Tool icon={<FrontIcon />} text="Bring to Front" off drop />
              <Tool icon={<BackIcon />} text="Send to Back" off drop />
              <Tool icon={<TabOrderIcon />} text="Tab Order" />
            </ArrangeColumn>
            <SmallColumn $rows={3}>
              <Tool icon={<AlignIcon />} text="Align" drop />
              <Tool icon={<GroupIcon />} text="Group" off drop />
              <Tool icon={<SizeIcon />} text="Size" off drop />
            </SmallColumn>
          </Group>
        </RibbonPanel>
        <PageTabs>
          {pageTabs.map(([name, w], i) => <PageTab key={name} $width={w} $active={i === 0}>{name}</PageTab>)}
        </PageTabs>
        <Surface>
          <Columns>
            <Side>
              <Block $icon={28} $height={89} $top={4}>
                <PersonIcon />
                <Rows $gap={2}>
                  <Field $height={19}><PushButton>Full Name...</PushButton><TextBox aria-label="Full Name" /></Field>
                  <Field><Caption htmlFor="job"><u>J</u>ob Title:</Caption><TextBox id="job" /></Field>
                  <Field $height={19}><Caption htmlFor="company">Compan<u>y</u>:</Caption><TextBox id="company" /></Field>
                  <Field $height={20}>
                    <Caption htmlFor="fileas">F<u>i</u>le As:</Caption>
                    <Combo><ComboInput id="fileas" /><ComboArrow aria-label="Open File As"><BlackDrop w={6} /></ComboArrow></Combo>
                  </Field>
                </Rows>
              </Block>
              <Rule />
              <Block $icon={28} $height={111} $top={11}>
                <HouseSlot><HouseIcon /></HouseSlot>
                <div>
                  <AddressRow>
                    <div>
                      <PushButton>Address...</PushButton>
                      <AddressKind><Caption as="span">Business</Caption><ArrowButton aria-label="Choose address"><BlackDrop /></ArrowButton></AddressKind>
                    </div>
                    <TextArea aria-label="Address" />
                  </AddressRow>
                  <MailCheck><FormCheckBox type="checkbox" /><span>This is the mailing add<u>r</u>ess</span></MailCheck>
                </div>
              </Block>
            </Side>
            <Side>
              <Block $height={89} $top={4}>
                <PhoneIcon />
                <Rows $gap={2}>
                  <PhoneRow id="p1" label="Business" />
                  <PhoneRow id="p2" label="Home" />
                  <PhoneRow id="p3" label="Business Fax" />
                  <PhoneRow id="p4" label="Mobile" />
                </Rows>
              </Block>
              <Rule />
              <Block $height={59} $top={10}>
                <MailIcon />
                <Rows $gap={3}>
                  <Field $label={95} $height={20}>
                    <LabelCell><Caption htmlFor="email">E-mail</Caption><ArrowButton aria-label="Choose e-mail"><BlackDrop /></ArrowButton></LabelCell>
                    <WideLine><TextBox id="email" $flat /><BookButton aria-label="Address book"><BookIcon /></BookButton></WideLine>
                  </Field>
                  <Field $label={95}>
                    <Caption htmlFor="display">Display As:</Caption>
                    <TextBox id="display" $width={231} />
                  </Field>
                </Rows>
              </Block>
              <Rule />
              <Block $height={50}>
                <WebIcon />
                <Rows $gap={6} $top={4}>
                  <Field $label={95}>
                    <Caption htmlFor="web"><u>W</u>eb page address:</Caption>
                    <WebBox id="web" $flat />
                  </Field>
                  <Field $label={95}>
                    <Caption htmlFor="im">IM address:</Caption>
                    <TextBox id="im" $flat $width={253} />
                  </Field>
                </Rows>
              </Block>
            </Side>
          </Columns>
          <Memo>
            <MemoText aria-label="Notes" />
            <ScrollColumn>
              <CompareIcon />
              <ScrollUp aria-label="Scroll up"><Svg w={8} h={5}><path d="M0 5l4-5 4 5z" fill="#4b5070" /></Svg></ScrollUp>
              <ScrollThumb><GripIcon c="#85869a" /></ScrollThumb>
              <button aria-label="Scroll down"><Svg w={8} h={5}><path d="M0 0l4 5 4-5z" fill="#4b5070" /></Svg></button>
            </ScrollColumn>
          </Memo>
          <Footer>
            <PushButton><u>C</u>ontacts...</PushButton>
            <TextBox aria-label="Contacts" $flat />
            <PushButton $width={64}>Cate<u>g</u>ories...</PushButton>
            <CategoriesBox aria-label="Categories" />
            <PrivateLabel><span><u>P</u>rivate</span><FormCheckBox type="checkbox" /></PrivateLabel>
          </Footer>
        </Surface>
        <BottomEdge />
        <Chooser>
          <ChooserTitle>Field Chooser<CloseButton aria-label="Close Field Chooser"><Close c="#fff" /></CloseButton></ChooserTitle>
          <ChooserBody>
            <SelectWrap>
              <Select aria-label="Field set"><option>Frequently-used fields</option></Select>
              <BlueArrow><Chevron /></BlueArrow>
            </SelectWrap>
            <ListFrame>
              <List>{fields.map((f) => <Item key={f}>{f}</Item>)}</List>
              <ListScroll>
                <ListScrollTop><BlueArrow as="button" aria-label="Up"><Chevron up /></BlueArrow><ListThumb><GripIcon c="#a0b8ea" /></ListThumb></ListScrollTop>
                <BlueArrow as="button" aria-label="Down"><Chevron /></BlueArrow>
              </ListScroll>
            </ListFrame>
            <ChooserButtons><XpButton>New...</XpButton><XpButton disabled>Delete</XpButton></ChooserButtons>
          </ChooserBody>
        </Chooser>
      </Frame>
    </Desktop>
  );
}
